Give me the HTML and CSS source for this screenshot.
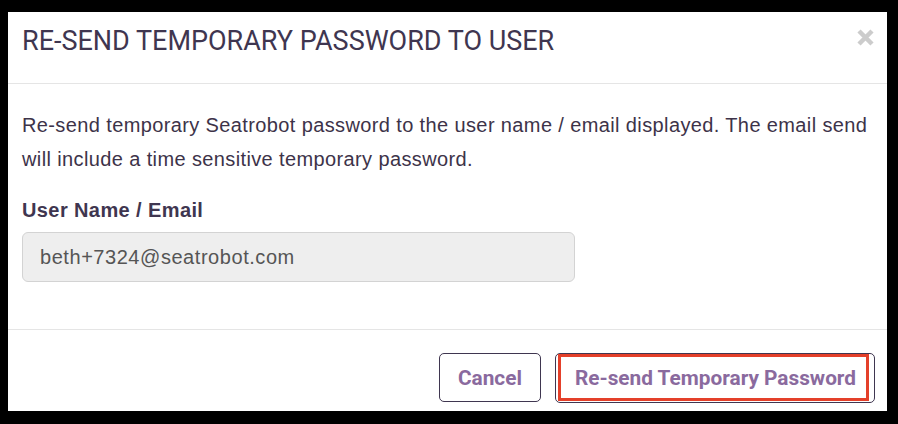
FILE: index.html
```html
<!DOCTYPE html>
<html>
<head>
<meta charset="utf-8">
<link rel="stylesheet" href="styles.css">
</head>
<body>
<div class="frame">
  <div class="dialog">
    <div class="header">
      <h4 class="title">RE-SEND TEMPORARY PASSWORD TO USER</h4>
      <span class="close" aria-label="Close"><svg width="17" height="17" viewBox="0 0 17 17"><path d="M2 2L15 15M15 2L2 15" stroke="#cccccc" stroke-width="4.5" fill="none"/></svg></span>
    </div>
    <div class="body">
      <p class="desc">Re-send temporary Seatrobot password to the user name / email displayed. The email send will include a time sensitive temporary password.</p>
      <label class="label">User Name / Email</label>
      <div class="input">beth+7324@seatrobot.com</div>
    </div>
    <div class="footer">
      <button class="btn">Cancel</button>
      <button class="btn btn-primary"><span class="focus-ring">Re-send Temporary Password</span></button>
    </div>
  </div>
</div>
</body>
</html>
```

FILE: styles.css
```css
html, body {
  margin: 0;
  padding: 0;
  background: #000;
}
.frame {
  width: 898px;
  height: 424px;
  box-sizing: border-box;
  padding: 12px 11px 13px 8px;
  background: #000;
}
.dialog {
  background: #fff;
  height: 100%;
  display: flex;
  flex-direction: column;
}
.header {
  height: 72px;
  box-sizing: border-box;
  border-bottom: 1px solid #e5e5e5;
  display: flex;
  align-items: flex-start;
  justify-content: space-between;
  padding: 13px 13px 0 14px;
}
.title {
  margin: 0;
  font-family: Roboto, sans-serif;
  font-weight: 400;
  font-size: 27px;
  line-height: 32px;
  color: #3f3650;
}
.close {
  display: block;
  margin-top: 4px;
  width: 17px;
  height: 17px;
}
.close svg {
  display: block;
}
.body {
  padding: 24px 10px 0 14px;
  flex: 1;
  border-bottom: 1px solid #e5e5e5;
}
.desc {
  margin: 0;
  font-family: "Liberation Sans", Arial, sans-serif;
  font-size: 20px;
  letter-spacing: 0.38px;
  line-height: 34px;
  color: #3d3349;
}
.label {
  display: block;
  margin-top: 22px;
  font-family: "Liberation Sans", Arial, sans-serif;
  font-weight: bold;
  font-size: 20px;
  letter-spacing: 0.4px;
  color: #3f3650;
  line-height: 24px;
}
.input {
  margin-top: 10px;
  width: 553px;
  height: 50px;
  box-sizing: border-box;
  background: #eeeeee;
  border: 1px solid #d3d3d3;
  border-radius: 6px;
  padding: 0 17px;
  display: flex;
  align-items: center;
  font-family: "Liberation Sans", Arial, sans-serif;
  font-size: 20px;
  letter-spacing: 0.55px;
  color: #555;
}
.footer {
  height: 81px;
  box-sizing: border-box;
  display: flex;
  justify-content: flex-end;
  align-items: flex-start;
  gap: 14px;
  padding: 23px 12px 0 0;
}
.btn {
  height: 49px;
  box-sizing: border-box;
  background: #fff;
  border: 1px solid #3f3650;
  border-radius: 5px;
  font-family: Roboto, sans-serif;
  font-weight: 700;
  font-size: 20.8px;
  color: #8a6a9e;
  padding: 0 18px;
  cursor: pointer;
}
.btn-primary {
  height: 50px;
  padding: 0 5px 1px 2px;
}
.focus-ring {
  display: flex;
  align-items: center;
  height: 100%;
  box-sizing: border-box;
  border: 3px solid #e4402a;
  padding: 0 10px 0 14px;
}
```
